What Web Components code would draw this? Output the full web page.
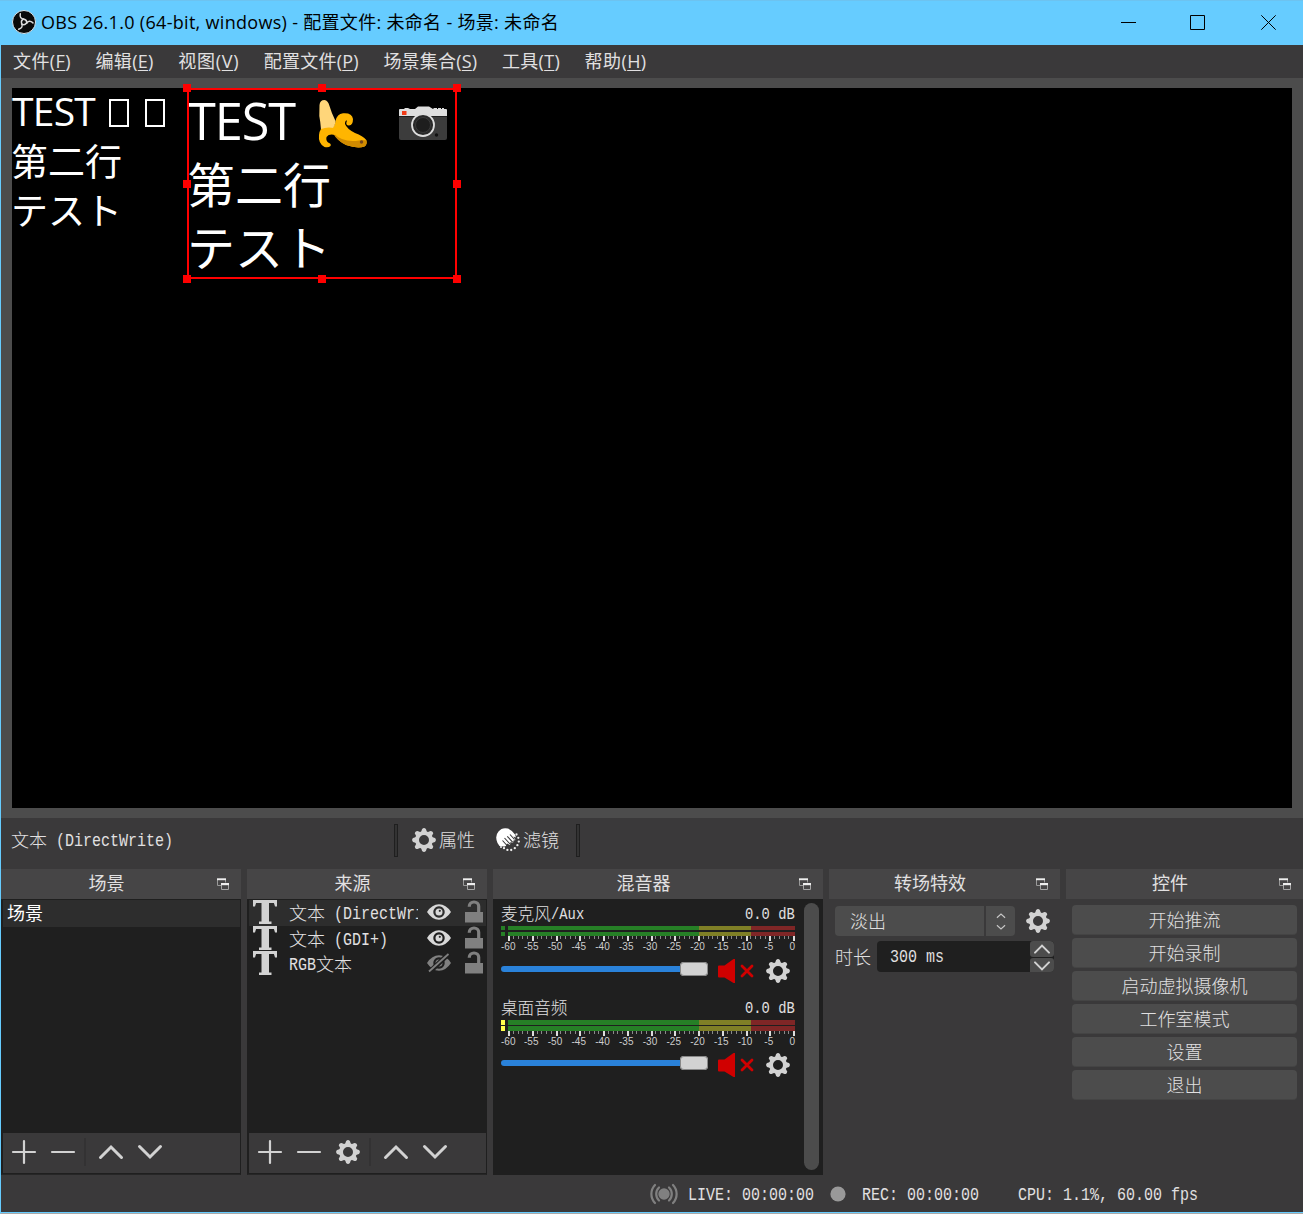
<!DOCTYPE html>
<html lang="zh-CN">
<head>
<meta charset="utf-8">
<title>OBS 26.1.0</title>
<style>
html,body{margin:0;padding:0;background:#3a393a}
body{width:1303px;height:1214px;overflow:hidden}
</style>
</head>
<body>
<obs-window></obs-window>
<script>
const define=(name,html,init)=>customElements.define(name,class extends HTMLElement{
  connectedCallback(){
    if(this.shadowRoot)return;
    this.attachShadow({mode:'open'});
    this.shadowRoot.innerHTML=typeof html==='function'?html(this):html;
    if(init)init(this);
  }
});
const A=(el,n,d='')=>el.getAttribute(n)??d;

/* ---------- icons ---------- */
const teeth=Array.from({length:8},(_,i)=>`<path d="M9 4.2 10.1 1Q12 -.9 13.9 1L15 4.2z" transform="rotate(${i*45} 12 12)"/>`).join('');
const dots=[[20.5,6.5],[22.3,9.8],[22.8,13.6],[21.4,17.2],[18.8,20.2],[15.2,22],[11.4,21.9],[8,20.2]].map(p=>`<circle cx="${p[0]}" cy="${p[1]}" r="1.15"/>`).join('');
const eye=`<path fill-rule="evenodd" d="M0 12Q5 4.3 12 4.3T24 12Q19 19.7 12 19.7T0 12zM12 6.3a5.7 5.7 0 1 0 .01 0z"/><circle cx="12" cy="12" r="3.5"/>`;
const arms=[0,120,240].map(a=>`<path d="M8.300 3.800Q7.300 8.800 12 9.300 15 9.800 14.800 13.200" transform="rotate(${a} 12 12)"/>`).join('');
const ICONS={
 gear:`<g fill="#d2d2d2">${teeth}</g><circle cx="12" cy="12" r="7" fill="none" stroke="#d2d2d2" stroke-width="4"/>`,
 plus:`<path d="M12 1v22M1 12h22" stroke="#d2d2d2" stroke-width="2.2" stroke-linecap="round"/>`,
 minus:`<path d="M1 12h22" stroke="#d2d2d2" stroke-width="2.2" stroke-linecap="round"/>`,
 up:`<path d="M1.5 17.5 12 7l10.500 10.500" fill="none" stroke="#d2d2d2" stroke-width="3" stroke-linecap="round"/>`,
 down:`<path d="M1.500 6.500 12 17 22.500 6.500" fill="none" stroke="#d2d2d2" stroke-width="3" stroke-linecap="round"/>`,
 eye:`<g fill="#d8d8d8">${eye}<circle cx="12.800" cy="10.800" r="1.100" fill="#2d2d2d"/></g>`,
 hidden:`<g fill="#808080">${eye}</g><path d="M2.500 21 21.500 3" stroke="#1f1f1f" stroke-width="5"/><path d="M2 20.500 21.500 3" stroke="#808080" stroke-width="1.800"/>`,
 lock:`<path d="M3 12h18v10.500H3z" fill="#808080"/><path d="M7.300 6.800V6.200a4.700 4.200 0 0 1 9.400 0V13" fill="none" stroke="#808080" stroke-width="3.200"/>`,
 type:`<g fill="#d2d2d2"><rect width="24" height="3"/><path d="M0 0h4L2 6.500H0zM24 0h-4l2 6.500h2z"/><rect x="8.500" width="7.500" height="24"/><rect x="6" y="21.500" width="12.500" height="2.500"/></g>`,
 speaker:`<path d="M1 6.500h5.500L15.500 0h1.500v24h-1.500L6.500 18.500H1Q0 18.500 0 17.500V7.500Q0 6.500 1 6.500z" fill="#d00000"/><path d="m24 7 10 10m0-10L24 17" stroke="#d00000" stroke-width="2.800" stroke-linecap="round"/>`,
 pop:`<path d="M.5 1.500V7.500H4M8.500 2v2.500" fill="none" stroke="#999"/><path d="M0 .3h9v1.900H0z" fill="#eee"/><path d="M4.500 6v5.500h7V6" fill="none" stroke="#a5a5a5"/><path d="M4 5h8v2.200H4z" fill="#eee"/>`,
 hand:`<path d="M1.500 15Q-1.500 8 2.500 3.500 6-1 12 .500 15.500 2 19 6.500l1 3L17.500 8.500 19.500 12 17.500 12.500 17 15 14.500 14 14 17 11 15.500Q10 19 8 18.500L3.500 18z" fill="#fff"/><path d="m8.500 10 5.500 6M11.300 8.300l5.500 6M14 6.500l4.500 5M6.500 12.500l4.500 5" stroke="#3a393a" stroke-width="1.100"/><g fill="#eee">${dots}<circle cx="5" cy="19" r="1"/></g>`,
 live:`<g fill="none" stroke="#808080" stroke-width="2.200" stroke-linecap="round"><path d="M9 5.500a9 9 0 0 0 0 13M19 5.500a9 9 0 0 1 0 13M5 3a13 13 0 0 0 0 18M23 3a13 13 0 0 1 0 18"/></g><circle cx="14" cy="12" r="5.700" fill="#808080"/>`,
 rec:`<circle cx="8" cy="8" r="7.600" fill="#999"/>`,
 min:`<path d="M0 7.500h15" stroke="#000"/>`,
 max:`<path d="M.5.5h14v14H.5z" fill="none" stroke="#000"/>`,
 close:`<path d="m.3.3 14.400 14.400M14.700.3.3 14.700" stroke="#000"/>`,
 logo:`<circle cx="12" cy="12" r="11.500" fill="#0a0a0a" stroke="#e8f4fb" stroke-width=".9"/><g fill="none" stroke="#dcdcdc" stroke-width="1.500" stroke-linecap="round">${arms}</g>`,
 spin:`<path d="m1 7 6-5.500L13 7M1 18l6 5.500L13 18" fill="none" stroke="#c8c8c8" stroke-width="1.600"/>`,
 banana:`<path d="M12 29Q16 26 16.500 21 18 14 24 13.300 33 12.500 34 19 34 25 30 25.500 26 25.500 28 20.500 26 20 26 24 28 29 36 33 44 36 47.300 40 48.500 44 45.500 46.500 38 49 27 45 17 40 12 29z" fill="#ffb500"/><path d="M14 33Q24 43 40 40.500q3-1 7.500 0 1 4-2 6Q39 49 27 45 18 41 14 33z" fill="#d18b00"/><path d="M.500 5Q1 0 5.500 0 9 .500 10.500 6 12.500 13 16.500 21 16.500 26 12 30L2 29.500Q1.500 22 .300 16z" fill="#ffd67a"/><path d="M2 29Q8 26.500 15 28L16 35Q10 33.500 7.500 37q-1 4 2.500 6 2.500 1 1.500 3-2 2-6 1Q-1 43.500 0 35 .500 31 2 29z" fill="#ffb500"/><circle cx="42.500" cy="42" r="1.700" fill="#75461c"/>`,
 camera:`<path d="M5 3 6 2h3l2 1h5l3-2.500h11l4 2.500 1-1h3v1h1V2h3v1h1V2h2v1h2q1 0 1 1v6H0V4q0-1 1-1z" fill="#dedede"/><path d="M0 10.500h48V32q0 2-2 2H2q-2 0-2-2z" fill="#3c3c3c"/><rect x="3" y="5" width="4.500" height="4" fill="#f03a17"/><circle cx="24" cy="19" r="11" fill="#292929" stroke="#ddd" stroke-width="1.800"/><circle cx="24" cy="19" r="7.500" fill="#1e1e1e" stroke="#3a3a3a"/><circle cx="37.500" cy="29" r="1.700" fill="#111"/>`
};
define('obs-icon',el=>{
  const w=A(el,'w','24'),h=A(el,'h',w),vw=A(el,'vw',w),vh=A(el,'vh',vw===w?h:vw);
  return `<style>:host{display:block;flex:none;width:${w}px;height:${h}px}svg{display:block;overflow:visible}</style><svg width="${w}" height="${h}" viewBox="0 0 ${vw} ${vh}">${ICONS[A(el,'name')]}</svg>`});

/* ---------- text: half-width Latin cells beside full-width CJK ---------- */
define('cell-text',el=>{
  const em=+A(el,'em','18'),half=em/2;
  const runs=el.textContent.match(/[\u3000-\u9fff]+|[^\u3000-\u9fff]+/g)||[];
  return `<style>:host{display:flex;height:24px;white-space:pre;color:#e1e0e1;font:300 ${em}px/22px "Noto Sans CJK SC",sans-serif}
  span{display:block;flex:none}
  .l{font:400 ${em}px/22px "Liberation Mono",monospace;padding-top:2px;transform-origin:0 0;transform:scaleX(${half/(em*.60009)})}</style>`+
  runs.map(r=>/[\u3000-\u9fff]/.test(r)?`<span>${r}</span>`:`<span class="l" style="width:${r.length*half}px">${r}</span>`).join('')});

/* ---------- text: proportional, spaced to a given width ---------- */
define('fit-text',el=>`<style>:host{display:block;white-space:pre;height:24px;font:400 ${A(el,'fs','18')}px/22px "Open Sans","Noto Sans CJK SC",sans-serif}span{display:inline-block}u{text-underline-offset:2px;text-decoration-thickness:1px}</style><span>${el.innerHTML}</span>`,
el=>{
  const w=+A(el,'w','0'),s=el.shadowRoot.querySelector('span');
  if(w){s.style.letterSpacing=(w-s.getBoundingClientRect().width)/s.textContent.length+'px';el.style.width=w+'px'}
});

define('title-bar',`<style>
:host{display:flex;align-items:center;height:45px;background:#6cf;color:#000;padding:0 27px 2px 12px;box-sizing:border-box;border-top:1px solid #6dc3f0}
.t{margin:2px 0 0 5px;flex:1;display:flex}.w{display:flex;gap:54px}obs-icon+obs-icon+obs-icon{margin-left:2px}
</style><obs-icon name="logo"></obs-icon><div class="t"><fit-text w="518">OBS 26.1.0 (64-bit, windows) - 配置文件: 未命名 - 场景: 未命名</fit-text></div>
<div class="w"><obs-icon name="min" w="15"></obs-icon><obs-icon name="max" w="15"></obs-icon><obs-icon name="close" w="15"></obs-icon></div>`);

define('menu-bar',`<style>:host{display:flex;align-items:center;height:33px;gap:24.600px;padding-left:12px;background:#3a393a;color:#e1e0e1}</style>
<fit-text w="58">文件(<u>F</u>)</fit-text><fit-text w="58">编辑(<u>E</u>)</fit-text><fit-text w="61">视图(<u>V</u>)</fit-text><fit-text w="95">配置文件(<u>P</u>)</fit-text><fit-text w="94">场景集合(<u>S</u>)</fit-text><fit-text w="58">工具(<u>T</u>)</fit-text><fit-text w="62">帮助(<u>H</u>)</fit-text>`);

define('preview-canvas',()=>{
  const pts=[[0,0],[135,0],[270,0],[0,96],[270,96],[0,191],[135,191],[270,191]];
  return `<style>
:host{display:block;height:740px;box-sizing:border-box;padding:10px 11px;background:#4c4c4c}
.c{position:relative;height:720px;width:1280px;background:#000;color:#fff;overflow:visible}
.s{position:absolute;white-space:pre;font-family:"Open Sans","Noto Sans CJK SC",sans-serif}
.s>div{display:flex;align-items:center;box-sizing:border-box}
.s .cj,.s .jp{margin-left:-1px}
.cj{font-family:"Noto Sans CJK SC",sans-serif}.jp{font-family:"Noto Sans CJK JP",sans-serif}
.a{left:0;top:0;font-size:37px;line-height:49px}.b{left:176px;top:0;font-size:48px;line-height:63px}
.a>div{height:48.500px}.b>div{height:63px}
i{display:block;width:20px;height:28px;box-sizing:border-box;border:2px solid #fff;margin-top:2px}
.g{position:absolute;left:171px;top:-4px}
</style><div class="c"><div class="s a"><div><fit-text fs="39" w="83">TEST</fit-text><i style="margin-left:14px"></i><i style="margin-left:16px"></i></div><div class="cj">第二行</div><div class="jp">テスト</div></div>
<div class="s b"><div style="padding-top:4px"><fit-text fs="50.500" w="107">TEST</fit-text><obs-icon name="banana" w="48" style="margin:5px 0 0 24px"></obs-icon><obs-icon name="camera" w="48" h="34" style="margin:3px 0 0 32px"></obs-icon></div><div class="cj">第二行</div><div class="jp">テスト</div></div>
<svg class="g" width="278" height="199"><rect x="5" y="5" width="268" height="189" fill="none" stroke="red" stroke-width="2"/>${pts.map(p=>`<rect x="${p[0]}" y="${p[1]}" width="8" height="8" fill="red"/>`).join('')}</svg></div>`});

define('context-bar',`<style>:host{display:flex;align-items:center;height:51px;box-sizing:border-box;padding:0 0 7px 10px;background:#3a393a}
.n{width:383px}.h{width:4px;height:33px;box-sizing:border-box;border:1px solid #1f1f1f;background:#333}obs-icon{margin-left:14px}.k{margin-left:21px}.e{margin-left:17px}.p{margin-left:3px}</style>
<cell-text class="n">文本 (DirectWrite)</cell-text><div class="h"></div><obs-icon name="gear"></obs-icon><cell-text class="p">属性</cell-text><obs-icon class="k" name="hand"></obs-icon><cell-text class="p">滤镜</cell-text><div class="h e"></div>`);

define('dock-panel',el=>`<style>:host{display:flex;flex-direction:column;flex:none;height:306px;width:${A(el,'w')}px}
header{height:30px;background:#464546;display:flex;align-items:center;padding-right:12px;color:#e1e0e1}
header div{flex:1;display:flex;justify-content:center;padding-right:5px}
main{flex:1;display:flex;flex-direction:column;min-height:0}</style>
<header><div><fit-text>${A(el,'title-text')}</fit-text></div><obs-icon name="pop" w="12"></obs-icon></header><main><slot></slot></main>`);

define('list-box',`<style>:host{display:flex;flex-direction:column;flex:1;background:#1f1f1f;border:1px solid #1f1f1f;border-bottom-color:#262626;padding-bottom:1px;box-sizing:border-box}
.l{flex:1}.t{height:40px;box-sizing:border-box;background:#3a393a;margin-left:1px;display:flex;align-items:center;gap:15px;padding:0 0 2px 9px}</style>
<div class="l"><slot></slot></div><div class="t"><slot name="tools"></slot></div>`);

define('tool-sep',`<style>:host{display:block;width:2px;height:28px;background:#333233;margin:0 -2px 0 -6px}</style>`);

define('scene-item',`<style>:host{display:flex;align-items:center;height:27px;background:#2d2d2d;color:#fff;padding-left:4px;margin-left:1px}</style><fit-text w="36"><slot></slot></fit-text>`);

define('source-item',el=>`<style>:host{display:flex;align-items:center;height:25.700px;box-sizing:border-box;padding:0 0 2px 4px;margin-left:1px;background:${el.hasAttribute('on')?'#2d2d2d':'transparent'}}
.n{width:129px;overflow:hidden;margin:2px 9px 0 12px}.k{margin-left:11px}</style>
<obs-icon name="type"></obs-icon><cell-text class="n">${el.textContent}</cell-text><obs-icon name="${A(el,'eye','eye')}"></obs-icon><obs-icon class="k" name="lock"></obs-icon>`);

define('level-meter',el=>{
  const on=el.hasAttribute('thick'),h=on?5:4;
  let s='';
  [0,6].forEach(y=>{s+=`<rect x="0" y="${y}" width="4" height="${h}" fill="${on?'#ffff4c':'#267f26'}"/><rect x="7" y="${y}" width="191" height="${h}" fill="#267f26"/><rect x="198" y="${y}" width="52" height="${h}" fill="#7f7f26"/><rect x="250" y="${y}" width="44" height="${h}" fill="#7f2626"/>`});
  const off=on?11:10;
  for(let i=0;i<=60;i++){const x=Math.round(7+i*4.750),M=i%5===0;s+=`<rect x="${x}" y="${off}" width="${M?2:1}" height="${M?5:3}" fill="${M?'#ddd':'#8a8a8a'}"/>`}
  for(let i=0;i<=12;i++){const v=-60+i*5;s+=`<text x="${i===12?294:(i===0?0:6.500+i*23.750)}" y="${off+14}" text-anchor="${i===12?'end':(i===0?'start':'middle')}">${v}</text>`}
  return `<style>:host{display:block;height:26px}svg{display:block;overflow:visible}text{font:10px "Liberation Sans",sans-serif;fill:#ccc}</style><svg width="294" height="26">${s}</svg>`});

define('mixer-channel',el=>`<style>:host{display:block;height:94px;width:294px;padding-left:8px}
.h{display:flex;justify-content:space-between;height:24px;margin-top:-1px}.c{display:flex;align-items:center;height:24px;margin-top:7px}
.s{position:relative;width:207px;height:24px}.r{position:absolute;left:0;top:7px;width:190px;height:6px;border-radius:3px;background:#2a82da}
.k{position:absolute;left:179px;top:3px;width:28px;height:14px;box-sizing:border-box;border-radius:4px;background:#d2d2d2;box-shadow:inset 0 0 0 1px #888}
.m{margin-left:10px}.g{margin-left:12px}</style>
<div class="h"><cell-text em="16.600">${A(el,'label')}</cell-text><cell-text em="16.600">0.0 dB</cell-text></div>
<level-meter ${el.hasAttribute('active')?'thick':''}></level-meter>
<div class="c"><div class="s"><div class="r"></div><div class="k"></div></div><obs-icon class="m" name="speaker" w="36" h="24"></obs-icon><obs-icon class="g" name="gear"></obs-icon></div>`);

define('audio-mixer',`<style>:host{display:flex;flex:1;background:#1f1f1f;padding:4px 4px 5px 0}.l{flex:1;display:flex;flex-direction:column}.b{width:15px;border-radius:8px;background:#4c4c4c}</style>
<div class="l"><mixer-channel label="麦克风/Aux"></mixer-channel><mixer-channel label="桌面音频" active></mixer-channel></div><div class="b"></div>`);

define('transition-form',`<style>:host{display:block;padding:7px 6px}
.r{display:flex;align-items:center}.r+.r{margin-top:5px}
.c{display:flex;width:180px;height:30px;border-radius:4px;background:#4c4c4c;align-items:center;box-sizing:border-box}
.c .v{width:134px;padding-left:15px}.a{border-left:2px solid #3a393a;height:30px;flex:1;display:flex;align-items:center;justify-content:center}
.g{margin-left:11px}.l{width:42px}
.s{display:flex;width:177px;height:31px;background:#1f1f1f;border-radius:4px;overflow:hidden}.s .v{flex:1;padding:3px 0 0 13px}
.b{width:24px;display:flex;flex-direction:column;gap:1px}.b div{flex:1;background:#4c4c4c;display:flex;align-items:center;justify-content:center;border-radius:3px}</style>
<div class="r"><div class="c"><cell-text class="v">淡出</cell-text><div class="a"><obs-icon name="spin" w="10" h="17" vw="14" vh="25"></obs-icon></div></div><obs-icon class="g" name="gear"></obs-icon></div>
<div class="r"><cell-text class="l">时长</cell-text><div class="s"><cell-text class="v">300 ms</cell-text><div class="b"><div><obs-icon name="up" w="16" vw="24" vh="24"></obs-icon></div><div><obs-icon name="down" w="16" vw="24" vh="24"></obs-icon></div></div></div></div>`);

define('push-button',`<style>:host{display:flex;align-items:center;justify-content:center;height:30px;box-sizing:border-box;border-radius:4px;background:#4c4c4c;border-bottom:1px solid #444}</style><slot></slot>`);
define('control-list',el=>`<style>:host{display:flex;flex-direction:column;gap:3px;padding:6px}</style>`+['开始推流','开始录制','启动虚拟摄像机','工作室模式','设置','退出'].map(t=>`<push-button><cell-text>${t}</cell-text></push-button>`).join(''));

define('status-bar',`<style>:host{display:flex;align-items:center;flex:1;padding-left:649px}.a{margin-left:10px}.b{margin-left:16px}.c{margin-left:16px}.d{margin-left:39px}</style>
<obs-icon name="live" w="28" h="24"></obs-icon><cell-text class="a">LIVE: 00:00:00</cell-text><obs-icon class="b" name="rec" w="16"></obs-icon><cell-text class="c">REC: 00:00:00</cell-text><cell-text class="d">CPU: 1.1%, 60.00 fps</cell-text>`);

define('obs-window',`<style>:host{display:flex;flex-direction:column;width:1303px;height:1214px;box-sizing:border-box;border-left:1px solid #6cf;border-bottom:1px solid #a9a9a9;background:#3a393a}
.d{display:flex;gap:6px;height:306px}.e{height:1px;background:#6cf;flex:none}title-bar,menu-bar,preview-canvas,context-bar,.d{flex:none}title-bar{margin-left:-1px}</style>
<title-bar></title-bar><menu-bar></menu-bar><preview-canvas></preview-canvas><context-bar></context-bar>
<div class="d">
<dock-panel w="240" title-text="场景"><list-box><scene-item>场景</scene-item>
<obs-icon slot="tools" name="plus"></obs-icon><obs-icon slot="tools" name="minus"></obs-icon><tool-sep slot="tools"></tool-sep><obs-icon slot="tools" name="up"></obs-icon><obs-icon slot="tools" name="down"></obs-icon></list-box></dock-panel>
<dock-panel w="240" title-text="来源"><list-box><source-item on>文本 (DirectWrite)</source-item><source-item>文本 (GDI+)</source-item><source-item eye="hidden">RGB文本</source-item>
<obs-icon slot="tools" name="plus"></obs-icon><obs-icon slot="tools" name="minus"></obs-icon><obs-icon slot="tools" name="gear"></obs-icon><tool-sep slot="tools"></tool-sep><obs-icon slot="tools" name="up"></obs-icon><obs-icon slot="tools" name="down"></obs-icon></list-box></dock-panel>
<dock-panel w="330" title-text="混音器"><audio-mixer></audio-mixer></dock-panel>
<dock-panel w="231" title-text="转场特效"><transition-form></transition-form></dock-panel>
<dock-panel w="237" title-text="控件"><control-list></control-list></dock-panel>
</div><status-bar></status-bar><div class="e"></div>`);
</script>
</body>
</html>
